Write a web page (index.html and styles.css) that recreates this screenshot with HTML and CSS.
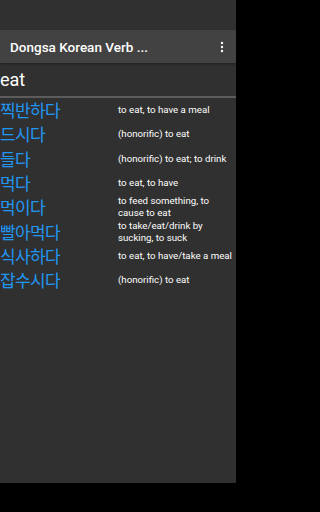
FILE: index.html
```html
<!DOCTYPE html>
<html>
<head>
<meta charset="utf-8">
<link rel="stylesheet" href="styles.css">
</head>
<body>
<div class="screen">
  <div class="status"></div>
  <div class="toolbar">
    <div class="title">Dongsa Korean Verb ...</div>
    <svg class="kebab" width="4" height="12" viewBox="0 0 4 12">
      <circle cx="2" cy="2" r="1.2" fill="#fff"/>
      <circle cx="2" cy="6" r="1.2" fill="#fff"/>
      <circle cx="2" cy="10" r="1.2" fill="#fff"/>
    </svg>
  </div>
  <div class="search">eat</div>
  <div class="list">
    <div class="row"><div class="word">찍반하다</div><div class="def">to eat, to have a meal</div></div>
    <div class="row"><div class="word">드시다</div><div class="def">(honorific) to eat</div></div>
    <div class="row"><div class="word">들다</div><div class="def">(honorific) to eat; to drink</div></div>
    <div class="row"><div class="word">먹다</div><div class="def">to eat, to have</div></div>
    <div class="row"><div class="word">먹이다</div><div class="def">to feed something, to cause to eat</div></div>
    <div class="row"><div class="word">빨아먹다</div><div class="def">to take/eat/drink by sucking, to suck</div></div>
    <div class="row"><div class="word">식사하다</div><div class="def">to eat, to have/take a meal</div></div>
    <div class="row"><div class="word">잡수시다</div><div class="def">(honorific) to eat</div></div>
  </div>
  <div class="navbar"></div>
</div>
</body>
</html>
```
FILE: styles.css
```css
html, body {
  margin: 0;
  padding: 0;
  background: #000;
}
.screen {
  width: 236px;
  height: 512px;
  display: flex;
  flex-direction: column;
  background: #303030;
  font-family: Roboto, "Noto Sans", sans-serif;
  color: #fff;
  overflow: hidden;
}
.status {
  height: 30px;
  background: #303030;
  flex: none;
}
.toolbar {
  height: 33px;
  flex: none;
  background: #424242;
  display: flex;
  align-items: center;
  justify-content: space-between;
  padding: 0 12px 0 10px;
  box-shadow: 0 1px 2px rgba(0,0,0,0.35);
  position: relative;
}
.title {
  font-size: 13.5px;
  font-weight: 500;
  color: #fff;
  white-space: nowrap;
}
.kebab {
  display: block;
  margin-top: 1px;
}
.search {
  height: 33px;
  flex: none;
  font-size: 18px;
  line-height: 33px;
  color: #fff;
  border-bottom: 2px solid #5c5c5c;
}
.list {
  flex: 1;
  display: flex;
  flex-direction: column;
}
.row {
  height: 24.3px;
  display: flex;
  align-items: center;
}
.word {
  width: 118px;
  flex: none;
  font-family: "Noto Sans CJK KR", sans-serif;
  font-size: 17px;
  color: #2196f3;
  letter-spacing: -0.6px;
  line-height: 20px;
  white-space: nowrap;
}
.def {
  width: 118px;
  flex: none;
  font-size: 9.7px;
  line-height: 12px;
}
.navbar {
  height: 29px;
  flex: none;
  background: #000;
}
```
